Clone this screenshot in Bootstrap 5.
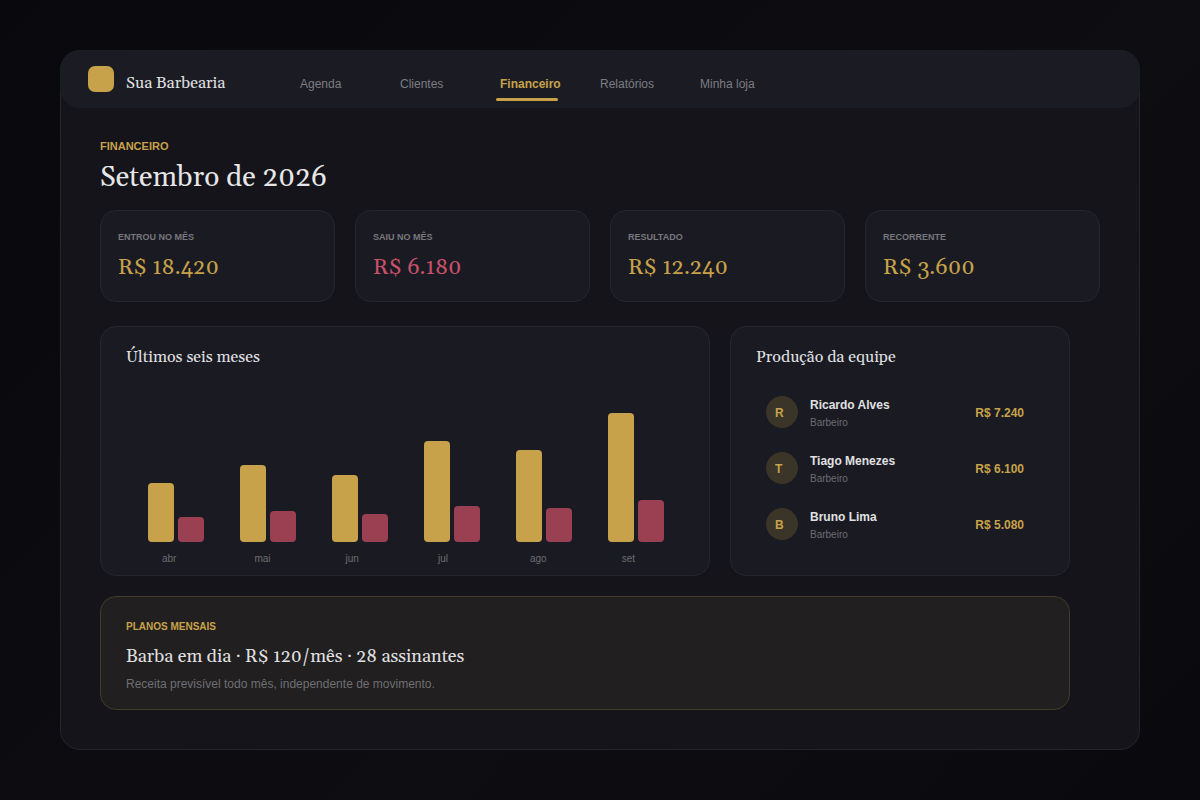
<!DOCTYPE html>
<html lang="pt-BR">
<head>
  <meta charset="UTF-8" />
  <meta name="viewport" content="width=device-width, initial-scale=1" />
  <title>Sua Barbearia - Financeiro</title>
  <link href="https://cdn.jsdelivr.net/npm/bootstrap@5.3.0/dist/css/bootstrap.min.css" rel="stylesheet">
  <style>
    html, body { height: 100%; }
    body { margin: 0; background: linear-gradient(135deg, #09090d, #0e0e12 60%, #0a0a0e); font-family: "Liberation Sans", Arial, sans-serif; color: #e6e6e8; overflow: hidden; }
    .serif { font-family: Georgia, Gelasio, "Liberation Serif", serif; font-weight: 400; }
    .stage { width: 1200px; height: 800px; padding: 50px 60px; }
    .shell { height: 700px; background: #14141a; border: 1px solid #25252b; border-radius: 20px; }
    .topbar { height: 58px; margin: -1px -1px 0; background: #1b1c23; border-radius: 20px; padding: 0 28px; }
    .logo-box { width: 26px; height: 26px; background: #c8a24a; border-radius: 7px; margin-right: 12px; }
    .brand-name { width: 174px; font-size: 16px; color: #e0e0e2; line-height: 16px; padding-top: 8px; }
    .menu-item { position: relative; width: 100px; font-size: 12px; line-height: 20px; color: #7c7c82; text-decoration: none; padding-top: 10px; }
    .menu-item.active-item { color: #c8a24a; font-weight: 700; }
    .menu-item.active-item::after { content: ""; position: absolute; left: -4px; top: 34px; width: 62px; height: 3px; border-radius: 2px; background: #c8a24a; }
    .content-area { padding: 32px 39px 0; }
    .eyebrow { font-size: 11px; font-weight: 700; color: #c8a24a; line-height: 13px; }
    .page-title { font-size: 28px; line-height: 36px; margin: 7px 0 14px; color: #e6e6e8; }
    .stat-row { display: grid; grid-template-columns: repeat(4, 235px); gap: 20px; }
    .panel { background: #1a1b22; border: 1px solid #26272d; border-radius: 16px; }
    .stat-panel { height: 92px; padding: 20px 17px 0; }
    .stat-label { font-size: 9px; font-weight: 700; color: #77777d; line-height: 12px; }
    .stat-value { font-size: 22px; line-height: 28px; margin-top: 11px; color: #c8a24a; }
    .stat-value.neg { color: #c9506a; }
    .mid-row { display: grid; grid-template-columns: 610px 340px; gap: 20px; margin-top: 24px; }
    .mid-row > .panel { height: 250px; }
    .chart-panel { padding: 19px 25px 0; }
    .panel-title { font-size: 16px; line-height: 22px; color: #e0e0e2; margin: 0; }
    .bars { height: 154px; margin: 20px 0 0 22px; gap: 36px; }
    .bar-pair { width: 56px; gap: 4px; }
    .bar-gold { width: 26px; background: #c8a24a; border-radius: 4px; }
    .bar-red { width: 26px; background: #9b3f52; border-radius: 4px; }
    .month-row { margin-top: 10px; padding-left: 36px; font-size: 10px; line-height: 14px; color: #6c6c72; }
    .month-row span:nth-child(2) { margin-left: 78px; }
    .month-row span:nth-child(3) { margin-left: 75px; }
    .month-row span:nth-child(4) { margin-left: 79px; }
    .month-row span:nth-child(5) { margin-left: 82px; }
    .month-row span:nth-child(6) { margin-left: 75px; }
    .team-panel { padding: 19px 25px 0; }
    .team-list { margin-top: 17px; }
    .team-row { height: 56px; padding: 0 10px; }
    .avatar { width: 32px; height: 32px; border-radius: 50%; background: #3a3528; color: #c8a24a; font-size: 12px; font-weight: 700; margin: 0 12px 2px 0; padding: 2px 0 0 9px; }
    .member-name { font-size: 12px; font-weight: 700; color: #e0e0e2; line-height: 14px; }
    .member-role { font-size: 10px; color: #6c6c72; line-height: 12px; margin-top: 5px; }
    .member-value { margin-left: auto; font-size: 12px; font-weight: 700; color: #c8a24a; margin-right: 10px; }
    .plan-panel { width: 970px; height: 114px; margin-top: 20px; padding: 24px 25px 0; background: #211f20; border: 1px solid #423b2a; border-radius: 16px; }
    .plan-eyebrow { font-size: 10px; font-weight: 700; color: #c8a24a; line-height: 12px; }
    .plan-title { font-size: 18px; line-height: 24px; margin: 12px 0 8px; color: #e0e0e2; }
    .plan-note { font-size: 12px; line-height: 14px; color: #6f6f74; }
  </style>
</head>
<body>
<div class="stage">
  <div class="shell">
    <nav class="topbar d-flex align-items-center">
      <div class="logo-box flex-shrink-0"></div>
      <div class="brand-name serif">Sua Barbearia</div>
      <a class="menu-item" href="#">Agenda</a>
      <a class="menu-item" href="#">Clientes</a>
      <a class="menu-item active-item" href="#">Financeiro</a>
      <a class="menu-item" href="#">Relatórios</a>
      <a class="menu-item" href="#">Minha loja</a>
    </nav>

    <div class="content-area">
      <div class="eyebrow">FINANCEIRO</div>
      <h1 class="page-title serif">Setembro de 2026</h1>

      <div class="stat-row">
        <div class="panel stat-panel">
          <div class="stat-label">ENTROU NO MÊS</div>
          <div class="stat-value serif">R$ 18.420</div>
        </div>
        <div class="panel stat-panel">
          <div class="stat-label">SAIU NO MÊS</div>
          <div class="stat-value neg serif">R$ 6.180</div>
        </div>
        <div class="panel stat-panel">
          <div class="stat-label">RESULTADO</div>
          <div class="stat-value serif">R$ 12.240</div>
        </div>
        <div class="panel stat-panel">
          <div class="stat-label">RECORRENTE</div>
          <div class="stat-value serif">R$ 3.600</div>
        </div>
      </div>

      <div class="mid-row">
        <div class="panel chart-panel">
          <h2 class="panel-title serif">Últimos seis meses</h2>
          <div class="bars d-flex align-items-end">
            <div class="bar-pair d-flex align-items-end"><div class="bar-gold" style="height:59px"></div><div class="bar-red" style="height:25px"></div></div>
            <div class="bar-pair d-flex align-items-end"><div class="bar-gold" style="height:77px"></div><div class="bar-red" style="height:31px"></div></div>
            <div class="bar-pair d-flex align-items-end"><div class="bar-gold" style="height:67px"></div><div class="bar-red" style="height:28px"></div></div>
            <div class="bar-pair d-flex align-items-end"><div class="bar-gold" style="height:101px"></div><div class="bar-red" style="height:36px"></div></div>
            <div class="bar-pair d-flex align-items-end"><div class="bar-gold" style="height:92px"></div><div class="bar-red" style="height:34px"></div></div>
            <div class="bar-pair d-flex align-items-end"><div class="bar-gold" style="height:129px"></div><div class="bar-red" style="height:42px"></div></div>
          </div>
          <div class="month-row d-flex">
            <span>abr</span><span>mai</span><span>jun</span><span>jul</span><span>ago</span><span>set</span>
          </div>
        </div>

        <div class="panel team-panel">
          <h2 class="panel-title serif">Produção da equipe</h2>
          <div class="team-list">
            <div class="team-row d-flex align-items-center">
              <div class="avatar d-flex align-items-center">R</div>
              <div><div class="member-name">Ricardo Alves</div><div class="member-role">Barbeiro</div></div>
              <div class="member-value">R$ 7.240</div>
            </div>
            <div class="team-row d-flex align-items-center">
              <div class="avatar d-flex align-items-center">T</div>
              <div><div class="member-name">Tiago Menezes</div><div class="member-role">Barbeiro</div></div>
              <div class="member-value">R$ 6.100</div>
            </div>
            <div class="team-row d-flex align-items-center">
              <div class="avatar d-flex align-items-center">B</div>
              <div><div class="member-name">Bruno Lima</div><div class="member-role">Barbeiro</div></div>
              <div class="member-value">R$ 5.080</div>
            </div>
          </div>
        </div>
      </div>

      <div class="plan-panel">
        <div class="plan-eyebrow">PLANOS MENSAIS</div>
        <div class="plan-title serif">Barba em dia · R$ 120/mês · 28 assinantes</div>
        <div class="plan-note">Receita previsível todo mês, independente de movimento.</div>
      </div>
    </div>
  </div>
</div>
<script src="https://cdn.jsdelivr.net/npm/bootstrap@5.3.0/dist/js/bootstrap.bundle.min.js"></script>
</body>
</html>
